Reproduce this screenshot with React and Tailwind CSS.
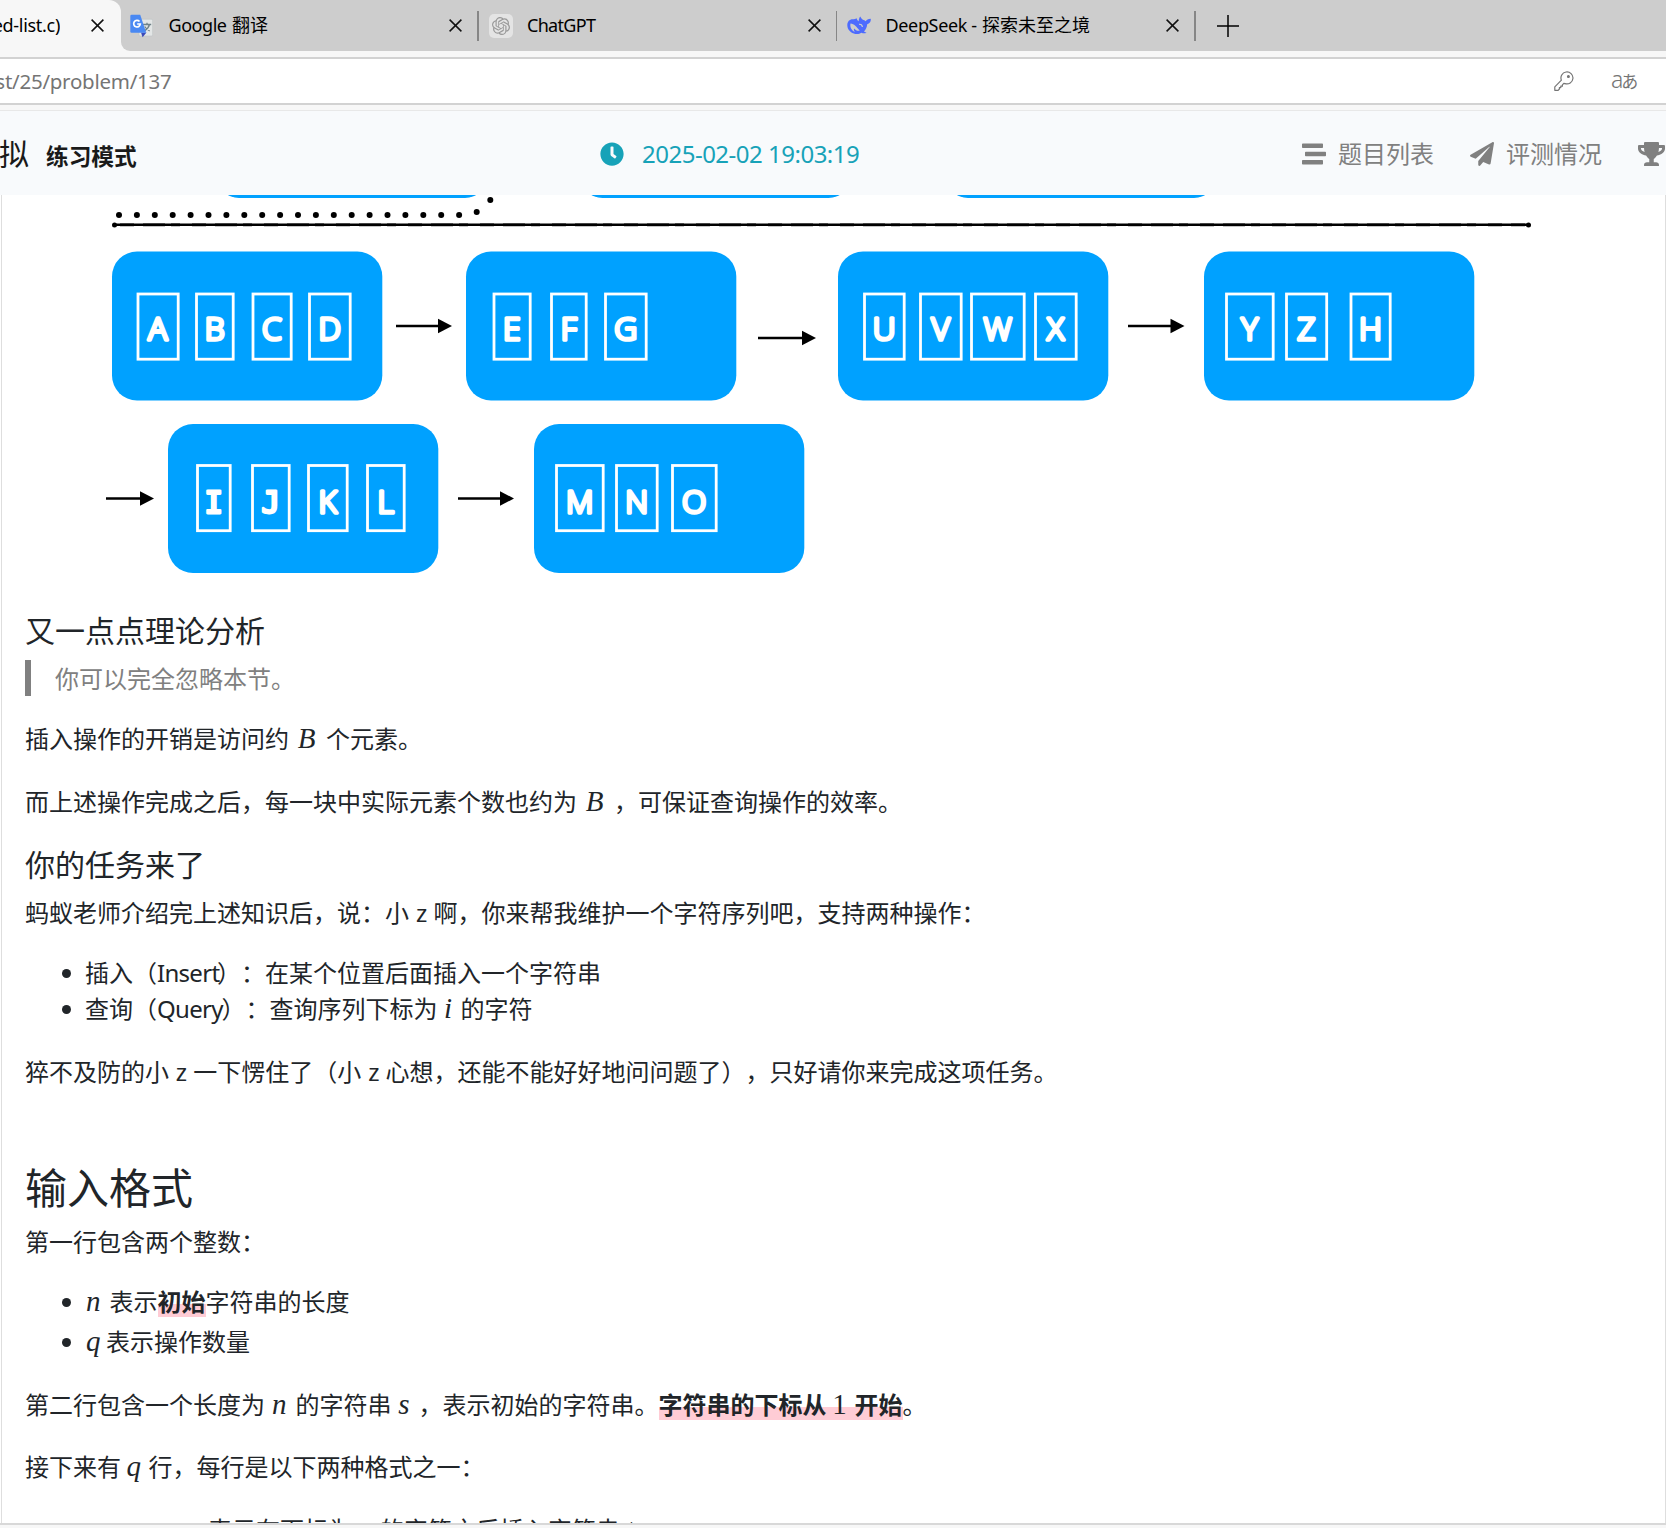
import React from "react";
import { FaClock, FaPaperPlane, FaStream, FaTrophy } from "react-icons/fa";
import { SiOpenai } from "react-icons/si";

const UI = "font-['Noto_Sans','Noto_Sans_CJK_SC',sans-serif] [text-spacing-trim:space-all]";

function CloseIcon() {
  return (
    <svg className="h-[13px] w-[13px] shrink-0" viewBox="0 0 13 13" fill="none" stroke="#111" strokeWidth="1.5">
      <path d="M.6.6 12.4 12.4M12.4.6.6 12.4" />
    </svg>
  );
}

function TranslateIcon() {
  return (
    <svg className="h-6 w-[23px]" viewBox="0 0 23 24">
      <rect x="9" y="5.2" width="13.6" height="16.8" rx="1.2" fill="#e3e6e6" stroke="#bfc4c6" strokeWidth=".6" />
      <path d="M13 10.5h8.2M17 8.8v1.7M19.5 10.5c-.8 3-2.800 5-5 6.400M14.700 12.500c1.200 2 3 3.500 5 4.500" fill="none" stroke="#6f8288" strokeWidth="1.300" />
      <path d="M11 18.500h5.500L12.600 23.200z" fill="#3a49b8" />
      <path d="M1.500.8h8.700L16.200 18.800H1.500A1.200 1.200 0 0 1 .3 17.600V2A1.200 1.200 0 0 1 1.500.8z" fill="#4a89f3" />
      <path d="M9.500 7.500A3.300 3.300 0 1 0 10.300 10H7.200" fill="none" stroke="#fff" strokeWidth="1.700" />
    </svg>
  );
}

function WhaleIcon() {
  return (
    <svg className="h-[19px] w-6" viewBox="0 0 24 19" fill="#4d6bfe">
      <path d="M13.200.6c.9 1.500 1.600 2.500 2.600 3.200 1.200.3 2 .7 2.900 1.500 1-1.500 2.400-2.300 5-2.600.5 2.500-.8 4.700-3.500 5.500-.3 3-1.400 5.500-3.200 7.300.8.500 1.800.9 2.600 1.300-1.900.8-3.700.7-5.200-.1-2 1.300-5 1.700-7.600.7C3 16.100.3 12.900.3 9.200.3 5.300 2.800 3.100 6 3.300c1.400.1 2.400-.3 3.600-1.100.4 1.300 1 2.200 2.100 3 .1-1.700.500-3.200 1.500-4.600z" />
      <path d="M3.500 7.400c3.700.200 6 3.400 9.200 7.200-2.300.700-3.900-.500-5.400-2.200-.9 1.200-.3 2.500.8 3.500C4.800 14.600 2.600 11.300 3.500 7.400z" fill="#cdcdcd" />
      <path d="M12 8.300c1.900-.3 3.100.800 3.400 2.700" fill="none" stroke="#cdcdcd" strokeWidth="1.200" />
    </svg>
  );
}

function Tab({ icon, children }) {
  return (
    <div className="flex h-full w-[358.500px] items-center">
      <div className="flex w-[38.500px] justify-start">{icon}</div>
      <div className="flex-1 whitespace-nowrap">{children}</div>
      <CloseIcon />
      <div className="ml-[15px] mr-[10px] h-[30px] w-[1.5px] bg-[#868686]" />
    </div>
  );
}

function TabStrip() {
  return (
    <div className="flex h-[51px] bg-[#cdcdcd] text-[18px] text-black">
      <div className="flex w-[121px] items-center rounded-tr-[12px] bg-[#f7f7f7]">
        <div className="flex w-[60px] justify-end overflow-hidden whitespace-nowrap tracking-[-0.3px]">ed-list.c)</div>
        <div className="ml-[31px] flex">
          <CloseIcon />
        </div>
      </div>
      <div className="flex flex-1 bg-[#f7f7f7]">
        <div className="flex flex-1 items-center rounded-bl-[9px] bg-[#cdcdcd] pl-[9px]">
          <Tab icon={<TranslateIcon />}>
            <span className="inline-block w-[63.500px] tracking-[-0.45px]">Google</span>翻译
          </Tab>
          <Tab
            icon={
              <div className="flex h-6 w-6 items-center justify-center rounded-[5px] bg-[#e4e4e4]">
                <SiOpenai className="h-[18px] w-[18px] text-[#999]" />
              </div>
            }
          >
            <span className="tracking-[-0.7px]">ChatGPT</span>
          </Tab>
          <Tab icon={<WhaleIcon />}>
            <span className="inline-block w-[96.500px] tracking-[-0.35px]">DeepSeek -</span>探索未至之境
          </Tab>
          <svg className="ml-[11px] h-[22px] w-[22px]" viewBox="0 0 22 22" stroke="#000" strokeWidth="1.500">
            <path d="M11 0v22M0 11h22" />
          </svg>
        </div>
      </div>
    </div>
  );
}

function AddressBar() {
  return (
    <div className="h-[60px] border-b border-[#e8e8e8] bg-[#f7f7f7] pt-[6px]">
      <div className="flex h-[48px] items-center border-y-2 border-[#d2d2d2] bg-white">
        <div className="flex w-[171.500px] justify-end overflow-hidden whitespace-nowrap text-[20.500px] tracking-[-0.25px] text-[#757575]">
          st/25/problem/137
        </div>
        <div className="flex-1" />
        <svg className="mr-[37px] h-5 w-5" viewBox="0 0 20 20" fill="none" stroke="#757575" strokeWidth="1.200" strokeLinejoin="round">
          <path d="M7.400 9.200A6 6 0 1 1 11 12.600l-1.200-.3-1.400 1.500v1.400H6.800v1.400H5.400V18l-1.300 1.300H.8v-3.400z" />
          <circle cx="14.400" cy="5.500" r=".9" fill="#757575" />
        </svg>
        <div className="flex w-[55px] items-baseline pb-[3px] text-[#757575]">
          <span className="text-[23px] font-light leading-none tracking-[-1px]">a</span>
          <span className="-ml-px font-['Noto_Sans_CJK_JP',sans-serif] text-[17px] leading-none">あ</span>
        </div>
      </div>
    </div>
  );
}

function SiteHeader() {
  return (
    <div className="flex h-[84px] items-center overflow-hidden bg-[#f8fafc] pt-[1px]">
      <div className="flex w-[29px] shrink-0 justify-end overflow-hidden text-[30px] text-[#1a1a1a]">拟</div>
      <div className="mt-[8px] w-[571px] shrink-0 pl-[17px] text-[22.700px] font-bold text-[#1a1a1a]">练习模式</div>
      <div className="flex w-[702px] shrink-0 items-center text-[#17a2b8]">
        <FaClock className="h-6 w-6" />
        <span className="ml-[18px] whitespace-nowrap text-[24px] tracking-[-0.5px]">2025-02-02 19:03:19</span>
      </div>
      <div className="flex shrink-0 items-center text-[24px] text-[#808080]">
        <FaStream className="h-6 w-6" />
        <span className="ml-[12px] w-[132px]">题目列表</span>
        <FaPaperPlane className="h-6 w-6" />
        <span className="ml-[12px] w-[132px]">评测情况</span>
        <FaTrophy className="h-6 w-[27px]" />
      </div>
    </div>
  );
}

const cards = [
  { x: 112, y: 251.5, cells: [["A", 136.5, 180], ["B", 195, 235], ["C", 251.5, 293], ["D", 308, 352]] },
  { x: 466, y: 251.5, cells: [["E", 492.5, 532], ["F", 550, 588], ["G", 604, 648]] },
  { x: 838, y: 251.5, cells: [["U", 863, 906], ["V", 919, 963], ["W", 970, 1026], ["X", 1034, 1078]] },
  { x: 1204, y: 251.5, cells: [["Y", 1225, 1275], ["Z", 1285, 1328.5], ["H", 1349.5, 1392]] },
  { x: 168, y: 424, cells: [["I", 196, 232], ["J", 251, 291], ["K", 307, 349], ["L", 366, 406]] },
  { x: 534, y: 424, cells: [["M", 555, 605], ["N", 615, 659], ["O", 671, 718]] },
];

const arrows = [
  [396, 452, 326],
  [758, 816, 338],
  [1128, 1184.5, 326],
  [106, 154, 498.5],
  [458, 514, 498.5],
];

const dots = [...Array.from({ length: 20 }, (_, i) => [119 + i * 17.9, 215]), [476.7, 212], [490.3, 200]];

function Figure() {
  return (
    <svg className="block h-[395px] w-[1662px]" viewBox="2 195 1662 395">
      {[217, 580.5, 946].map((x) => (
        <rect key={x} x={x} y="48.500" width="270" height="149.500" rx="22" fill="#00a1ff" />
      ))}
      {dots.map(([x, y]) => (
        <circle key={x} cx={x} cy={y} r="3" />
      ))}
      <path d="M114 224.800H1529" stroke="#000" strokeWidth="2.400" />
      <path d="M120 224.800H1525" stroke="#000" strokeWidth="3.600" strokeDasharray="14 9 22 6 9 12" opacity=".45" />
      <circle cx="114.500" cy="224.900" r="2.500" />
      <circle cx="1528.500" cy="224.900" r="2.500" />
      {cards.map((c) => (
        <g key={c.x}>
          <rect x={c.x} y={c.y} width="270.300" height="149" rx="25" fill="#00a1ff" />
          {c.cells.map(([ch, a, b]) => {
            const slab = ch === "I" || ch === "J";
            return (
              <g key={ch}>
                <rect x={a + 1.5} y={c.y < 300 ? 294 : 465.5} width={b - a - 3.3} height="65.200" fill="none" stroke="#fff" strokeWidth="2.800" />
                <text
                  x={(a + b) / 2 - 0.4}
                  y={c.y < 300 ? 340.3 : 512.5}
                  textAnchor="middle"
                  fontSize={slab ? 30.5 : 31.7}
                  fontWeight={slab ? 400 : 300}
                  fill="#fff"
                  stroke="#fff"
                  strokeWidth={slab ? 2.8 : 3.6}
                  strokeLinejoin="round"
                  className={slab ? "font-['DejaVu_Sans_Mono',monospace]" : "font-['Open_Sans',sans-serif]"}
                >
                  {ch}
                </text>
              </g>
            );
          })}
        </g>
      ))}
      {arrows.map(([a, b, y]) => (
        <g key={a}>
          <path d={`M${a} ${y}H${b - 12}`} stroke="#000" strokeWidth="2.700" />
          <path d={`M${b - 14} ${y - 7.3}L${b} ${y}L${b - 14} ${y + 7.3}Z`} />
        </g>
      ))}
    </svg>
  );
}

function M({ w, left, children }) {
  return (
    <span
      className={`inline-block font-['Liberation_Serif',serif] text-[29px] font-normal italic leading-none ${left ? "pl-px text-left" : "pr-[2px] text-center"}`}
      style={{ width: w }}
    >
      {children}
    </span>
  );
}

function L({ w, children }) {
  return (
    <span className="inline-block whitespace-nowrap text-center tracking-[-0.7px]" style={{ width: w }}>
      {children}
    </span>
  );
}

function Li({ children, className = "" }) {
  return (
    <li className={`flex h-9 items-center whitespace-nowrap ${className}`}>
      <span className="ml-[37px] mr-[14px] h-[9px] w-[9px] rounded-full bg-[#212529]" />
      <span>{children}</span>
    </li>
  );
}

const mark = "bg-[linear-gradient(transparent_20px,#ffccd5_20px)] inline-block h-[33px] font-bold";

function Statement() {
  return (
    <div className="h-[933px] overflow-hidden whitespace-nowrap pl-[23px] text-[24px] leading-9 text-[#212529]">
      <h3 className="mt-[23px] h-9 text-[30px]">又一点点理论分析</h3>
      <blockquote className="mt-[11px] h-9 border-l-[6px] border-[#808080] pl-6 pt-px text-[#808080]">你可以完全忽略本节。</blockquote>
      <p className="mt-[25px] h-9">插入操作的开销是访问约<M w={37}>B</M>个元素。</p>
      <p className="mt-[27px] h-9">而上述操作完成之后，每一块中实际元素个数也约为<M w={37}>B</M>，可保证查询操作的效率。</p>
      <h3 className="mt-[27px] h-9 text-[30px]">你的任务来了</h3>
      <p className="mt-[12px] h-9">蚂蚁老师介绍完上述知识后，说：小<L w={24.5}>z</L>啊，你来帮我维护一个字符序列吧，支持两种操作：</p>
      <ul className="mt-6">
        <Li>插入（<L w={60}>Insert</L>）：在某个位置后面插入一个字符串</Li>
        <Li>查询（<L w={64.5}>Query</L>）：查询序列下标为<M w={23}>i</M>的字符</Li>
      </ul>
      <p className="mt-[27px] h-9">猝不及防的小<L w={24.3}>z</L>一下愣住了（小<L w={24.3}>z</L>心想，还能不能好好地问问题了），只好请你来完成这项任务。</p>
      <h2 className="mt-[73px] h-[50px] text-[42px] leading-[50px]">输入格式</h2>
      <p className="mt-[11px] h-9">第一行包含两个整数：</p>
      <ul className="mt-6">
        <Li><M w={24.5} left>n</M>表示<span className={mark}>初始</span>字符串的长度</Li>
        <Li className="mt-1"><M w={21} left>q</M>表示操作数量</Li>
      </ul>
      <p className="mt-[27px] h-9">第二行包含一个长度为<M w={30.5}>n</M>的字符串<M w={27}>s</M>，表示初始的字符串。<span className={mark}>字符串的下标从<M w={28}><span className="not-italic">1</span></M>开始</span>。</p>
      <p className="mt-[26px] h-9">接下来有<M w={27.5}>q</M>行，每行是以下两种格式之一：</p>
      <p className="mt-[27px] h-9 pl-[183px]">表示在下标为<M w={28}>x</M>的字符之后插入字符串<M w={22}>t</M></p>
    </div>
  );
}

export default function App() {
  return (
    <div className={`flex h-[1528px] w-[1666px] flex-col overflow-hidden bg-white ${UI}`}>
      <TabStrip />
      <AddressBar />
      <SiteHeader />
      <main className="ml-px h-[1328px] border-l border-r border-[#dedede]">
        <Figure />
        <Statement />
      </main>
      <div className="h-[5px] border-t-2 border-[#d8d8d8] bg-[#f7f7f7]" />
    </div>
  );
}
